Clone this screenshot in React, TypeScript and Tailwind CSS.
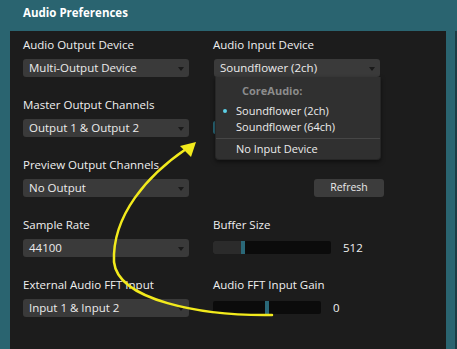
import React from 'react';

const font = { fontFamily: '"Open Sans", "DejaVu Sans", sans-serif' };

function Select({ value }: { value: string }) {
	return (
		<div className="flex h-[18px] w-[166px] items-center justify-between rounded-[3px] bg-[#3a3a3a] pl-[6px] pr-[5px] text-[11.5px] text-[#ececec]">
			<span>{value}</span>
			<svg width="6" height="4" viewBox="0 0 6 4" className="mt-[2px]">
				<path d="M0 0 L6 0 L3 4 Z" fill="#1a1a1a" />
			</svg>
		</div>
	);
}

function Slider({ width, handle, filled }: { width: number; handle: number; filled: boolean }) {
	return (
		<div className="flex h-[13px] overflow-hidden rounded-[2px] bg-[#0b0b0b]" style={{ width }}>
			<div className={filled ? 'h-full bg-[#2b2b2b]' : 'h-full'} style={{ width: handle }} />
			<div className="h-full w-[4px] bg-[#2a6878]" />
		</div>
	);
}

function Label({ children }: { children?: React.ReactNode }) {
	return <div className="h-[14px] text-[11.5px] leading-[14px] text-[#f0f0f0]">{children}</div>;
}

export default function App() {
	return (
		<div className="relative flex h-[349px] w-[457px] flex-col overflow-hidden bg-[#2a6470]" style={font}>
			<div className="flex h-[31px] items-center pl-[23px] pb-[5px] text-[11.5px] font-bold text-white">
				Audio Preferences
			</div>
			<div className="flex flex-1">
				<div className="ml-[10px] w-[436px] bg-[#1c1c1c] pl-[13px] pt-[7px]">
					<div className="grid grid-cols-[166px_1fr] gap-x-[24px]">
						{/* row 1 */}
						<div className="flex h-[60px] flex-col gap-[7px]">
							<Label>Audio Output Device</Label>
							<Select value="Multi-Output Device" />
						</div>
						<div className="flex h-[60px] flex-col gap-[7px]">
							<Label>Audio Input Device</Label>
							<div className="ml-[1px]">
								<Select value="Soundflower (2ch)" />
							</div>
						</div>
						{/* row 2 */}
						<div className="flex h-[60px] flex-col gap-[7px]">
							<Label>Master Output Channels</Label>
							<Select value="Output 1 & Output 2" />
						</div>
						<div className="flex h-[60px] flex-col gap-[7px]">
							<Label />
							<div className="mt-[2px]">
								<Slider width={118} handle={0} filled={false} />
							</div>
						</div>
						{/* row 3 */}
						<div className="flex h-[60px] flex-col gap-[7px]">
							<Label>Preview Output Channels</Label>
							<Select value="No Output" />
						</div>
						<div className="flex h-[60px] flex-col gap-[7px]">
							<div className="h-[14px]" />
							<div className="flex h-[18px] w-[171px] justify-end">
								<button className="h-[18px] w-[70px] rounded-[3px] bg-[#3c3c3c] text-[10.5px] text-[#eaeaea]">
									Refresh
								</button>
							</div>
						</div>
						{/* row 4 */}
						<div className="flex h-[60px] flex-col gap-[7px]">
							<Label>Sample Rate</Label>
							<Select value="44100" />
						</div>
						<div className="flex h-[60px] flex-col gap-[7px]">
							<Label>Buffer Size</Label>
							<div className="mt-[2px] flex items-center gap-[12px]">
								<Slider width={118} handle={28} filled />
								<span className="text-[11.5px] leading-[13px] text-[#f0f0f0]">512</span>
							</div>
						</div>
						{/* row 5 */}
						<div className="flex h-[60px] flex-col gap-[7px]">
							<Label>External Audio FFT Input</Label>
							<Select value="Input 1 & Input 2" />
						</div>
						<div className="flex h-[60px] flex-col gap-[7px]">
							<Label>Audio FFT Input Gain</Label>
							<div className="mt-[2px] flex items-center gap-[12px]">
								<Slider width={108} handle={52} filled={false} />
								<span className="text-[11.5px] leading-[13px] text-[#f0f0f0]">0</span>
							</div>
						</div>
					</div>
				</div>
				<div className="w-[9px] bg-[#2a6470]" />
				<div className="w-[2px] bg-[#1b3d45]" />
			</div>

			{/* open dropdown menu */}
			<div className="absolute left-[215px] top-[77px] flex h-[83px] w-[166px] flex-col rounded-b-[4px] border border-t-0 border-[#262626] bg-[#303030] text-[11px] text-[#ececec] shadow-[0_2px_4px_rgba(0,0,0,0.5)]">
				<div className="ml-[26px] mt-[6px] h-[16px] font-bold leading-[16px] text-[#8c8c8c]">CoreAudio:</div>
				<div className="mt-[4px] flex h-[16px] items-center leading-[16px]">
					<span className="ml-[7px] mr-[9px] h-[4px] w-[4px] rounded-full bg-[#5ccfe6]" />
					Soundflower (2ch)
				</div>
				<div className="ml-[20px] h-[16px] leading-[16px]">Soundflower (64ch)</div>
				<div className="mt-[3px] h-px bg-[#464646]" />
				<div className="ml-[20px] mt-[2px] h-[16px] leading-[16px]">No Input Device</div>
			</div>

			{/* annotation arrow */}
			<svg className="pointer-events-none absolute left-0 top-0" width="457" height="349" viewBox="0 0 457 349">
				<path
					d="M272 315 C 200 316, 118 300, 114 262 C 112 215, 148 175, 186 149"
					fill="none"
					stroke="#f2ea1c"
					strokeWidth="2.5"
					strokeLinecap="round"
				/>
				<path d="M196 142 L 180 146 L 191 157 Z" fill="#f2ea1c" />
			</svg>
		</div>
	);
}
